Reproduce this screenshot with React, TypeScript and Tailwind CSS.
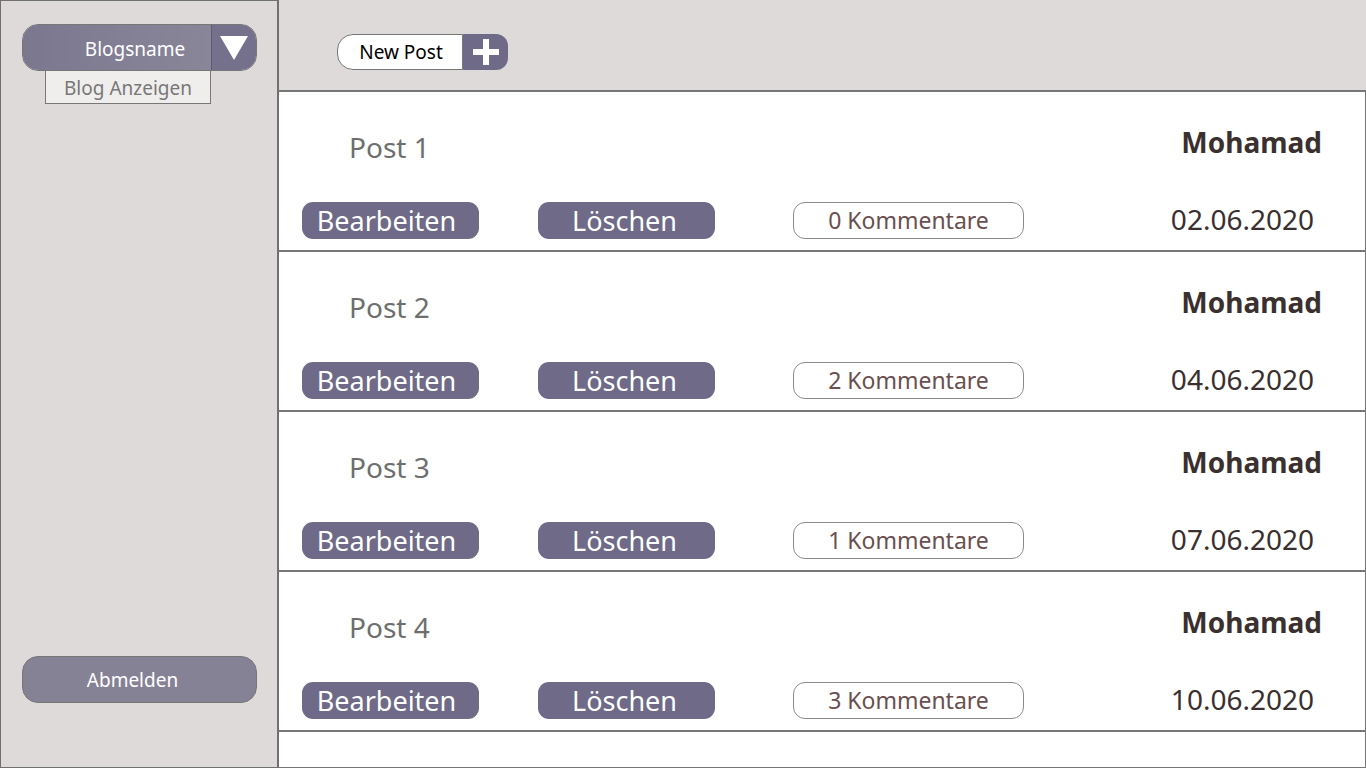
import React from 'react';

type Post = { title: string; author: string; comments: number; date: string };

const posts: Post[] = [
  { title: 'Post 1', author: 'Mohamad', comments: 0, date: '02.06.2020' },
  { title: 'Post 2', author: 'Mohamad', comments: 2, date: '04.06.2020' },
  { title: 'Post 3', author: 'Mohamad', comments: 1, date: '07.06.2020' },
  { title: 'Post 4', author: 'Mohamad', comments: 3, date: '10.06.2020' },
];

function PostRow({ post }: { post: Post }) {
  return (
    <div className="h-[160px] border-b-2 border-[#777777] pl-[23px] pr-[43px] flex flex-col">
      {/* Title + author */}
      <div className="flex items-start justify-between pt-[36px] leading-[28px]">
        <span className="ml-[47px] mt-[5px] text-[28px] text-[#6e6e6e]">{post.title}</span>
        <span className="text-[28px] font-bold text-[#3b3030]">{post.author}</span>
      </div>

      {/* Actions */}
      <div className="mt-[41px] flex items-center">
        <button className="w-[177px] h-[37px] rounded-[11px] bg-[#6e6a88] text-white text-[27px] leading-none pr-[8px]">
          Bearbeiten
        </button>
        <button className="ml-[59px] w-[177px] h-[37px] rounded-[11px] bg-[#6e6a88] text-white text-[27px] leading-none pr-[4px]">
          Löschen
        </button>
        <button className="ml-[78px] w-[231px] h-[37px] rounded-[12px] border border-[#8a8a8a] bg-white text-[#6b4f4f] text-[23px] leading-none">
          {post.comments} Kommentare
        </button>
        <span className="ml-auto mr-[8px] -mt-[4px] text-[28px] leading-none text-[#3b3030]">{post.date}</span>
      </div>
    </div>
  );
}

export default function App() {
  return (
    <div
      className="flex h-[768px] w-full bg-[#dedad9]"
      style={{ fontFamily: '"Noto Sans", "Open Sans", sans-serif' }}
    >
      {/* Sidebar */}
      <aside className="w-[279px] shrink-0 h-full border-l border-t border-b border-r-2 border-[#707070] flex flex-col justify-between pl-[21px] pt-[23px] pb-[64px]">
        <div className="flex flex-col">
          <div className="w-[235px] h-[47px] rounded-[16px] border border-[#777777] flex overflow-hidden">
            <div className="flex-1 bg-gradient-to-r from-[#7b778f] to-[#8a8699] flex items-center justify-center pl-[36px] pt-[3px] text-white text-[19px]">
              Blogsname
            </div>
            <div className="w-[45px] bg-[#75718c] border-l border-[#5f5c72] flex items-center justify-center">
              <svg width="30" height="26" viewBox="0 0 30 26">
                <polygon points="1,1 29,1 15,25" fill="#ffffff" />
              </svg>
            </div>
          </div>
          <div className="ml-[23px] w-[166px] h-[34px] -mt-px border border-[#777777] bg-[#f0eeed] flex items-center justify-center pt-[2px] text-[19px] text-[#777777]">
            Blog Anzeigen
          </div>
        </div>
        <button className="w-[235px] h-[47px] rounded-[16px] border border-[#777777] bg-[#868296] text-white text-[19px] pr-[14px] pt-[2px]">
          Abmelden
        </button>
      </aside>

      {/* Main */}
      <main className="flex-1 flex flex-col h-full">
        <header className="h-[90px] shrink-0 pl-[58px] pt-[34px]">
          <div className="flex h-[36px] w-[171px]">
            <div className="flex-1 rounded-l-[16px] border border-[#777777] bg-white flex items-center justify-center pl-[2px] text-[19px] text-black">
              New Post
            </div>
            <div className="w-[45px] rounded-r-[12px] bg-[#6e6a88] flex items-center justify-center">
              <svg width="28" height="28" viewBox="0 0 28 28">
                <rect x="11" y="1" width="6" height="26" fill="#ffffff" />
                <rect x="1" y="11" width="26" height="6" fill="#ffffff" />
              </svg>
            </div>
          </div>
        </header>

        <section className="flex-1 bg-white border-t-2 border-r border-b border-[#777777]">
          {posts.map((p) => (
            <PostRow key={p.title} post={p} />
          ))}
        </section>
      </main>
    </div>
  );
}
